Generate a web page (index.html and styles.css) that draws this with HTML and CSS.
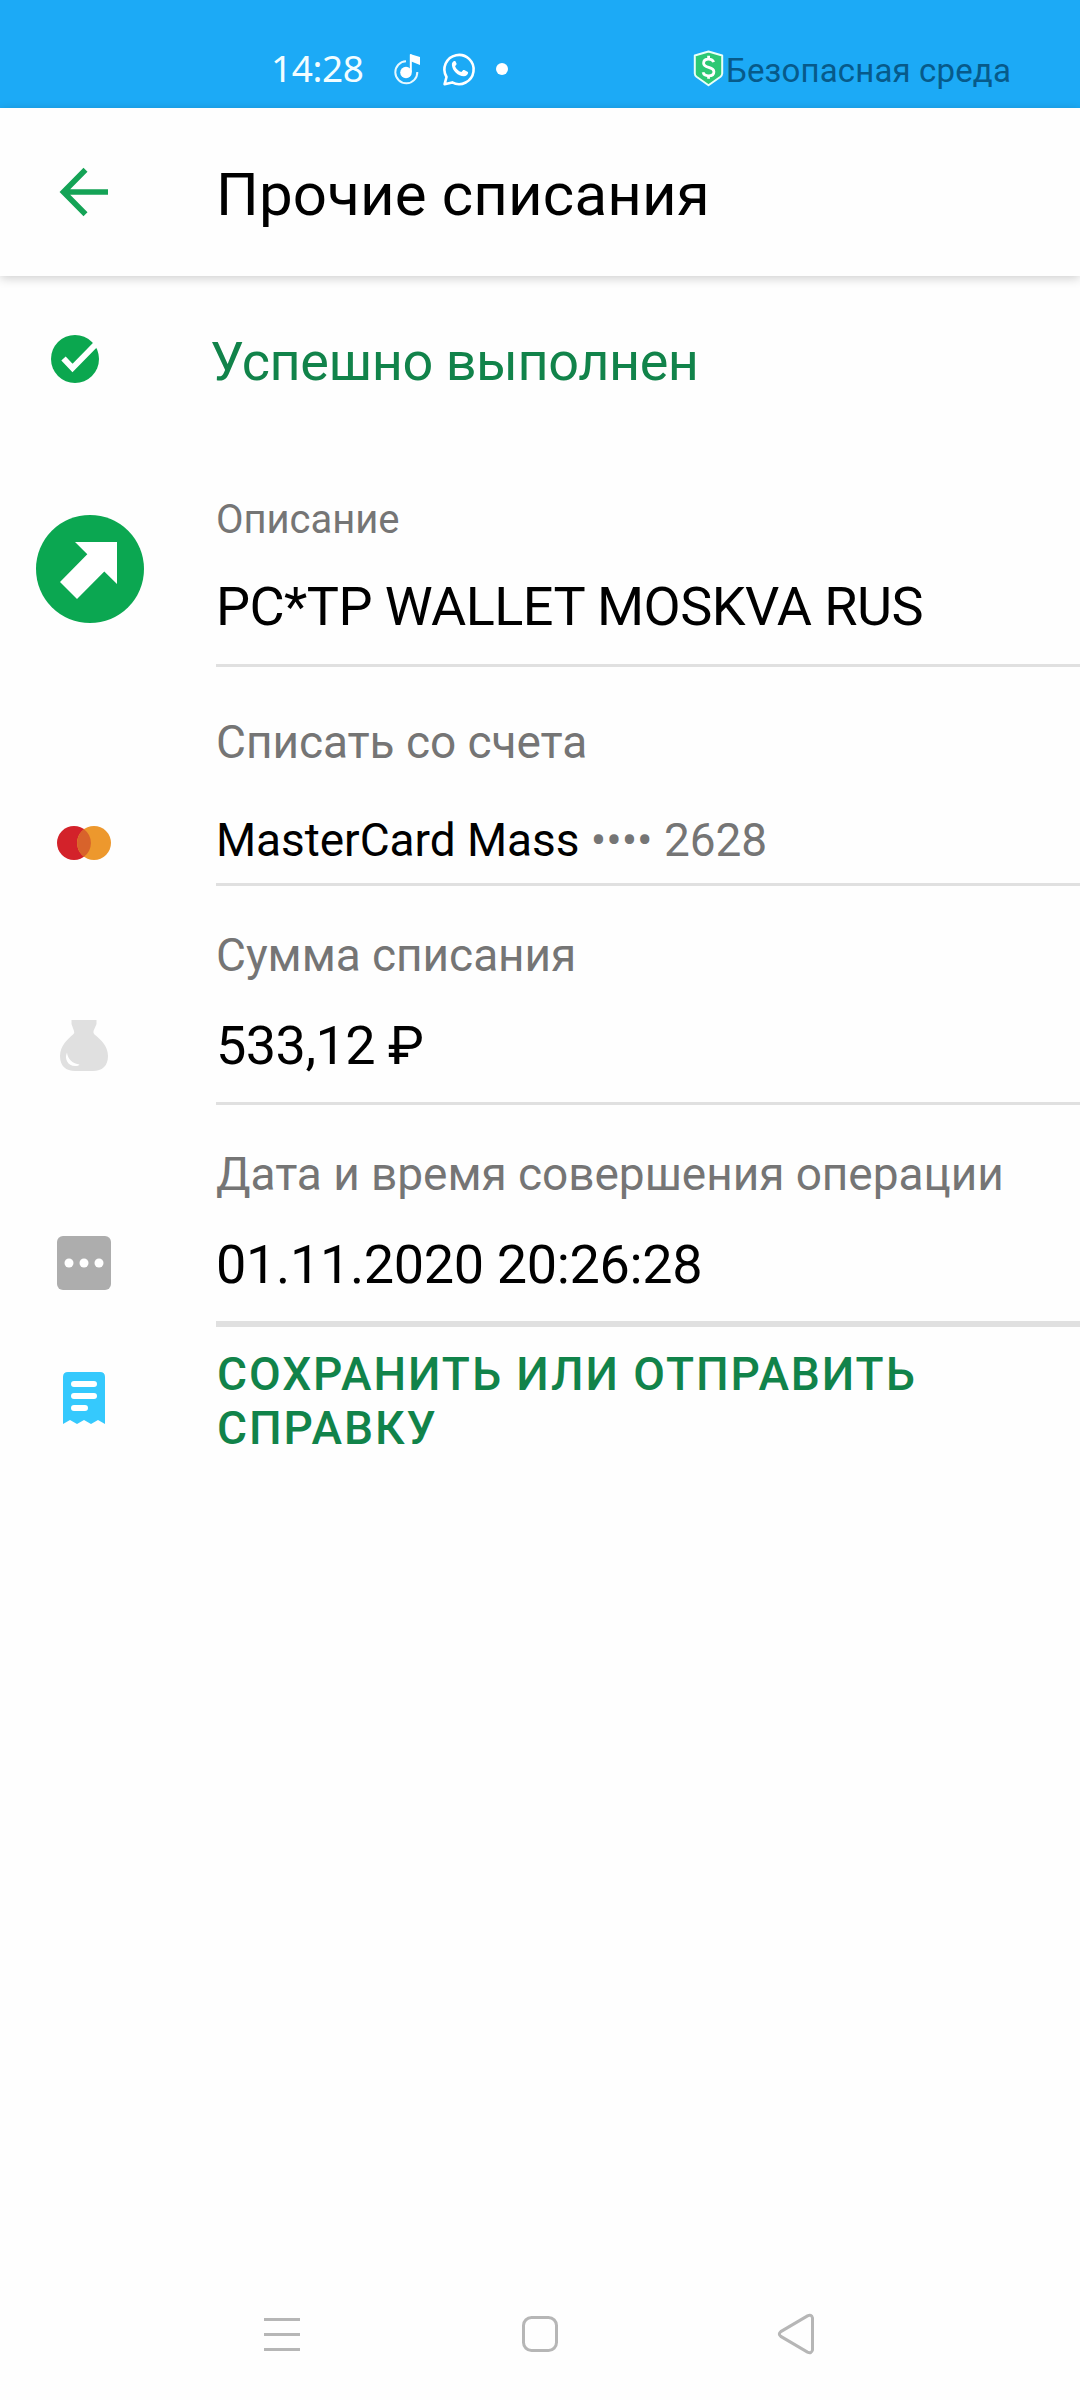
FILE: index.html
```html
<!DOCTYPE html>
<html lang="ru">
<head>
<meta charset="utf-8">
<title>Прочие списания</title>
<link rel="stylesheet" href="styles.css">
</head>
<body>
<div class="screen">
  <div class="statusbar">
    <span class="clock">14:28</span>
    <svg class="sb-music" width="28" height="32" viewBox="0 0 28 32"><circle cx="12" cy="19.500" r="5.800" fill="#fff"/><path d="M16.800 19V1.500" stroke="#fff" stroke-width="2"/><path d="M16 1l10 3v8l-10-4z" fill="#fff"/><path d="M12 8.300A11 11 0 1 0 23.300 19" fill="none" stroke="#e6f8ff" stroke-width="2"/></svg>
    <svg class="sb-whatsapp" width="34" height="34" viewBox="0 0 34 34"><path d="M3.500 25A14.600 14.600 0 1 1 9.200 30.400L1.600 32.200Z" fill="none" stroke="#fff" stroke-width="2.600" stroke-linejoin="round"/><path d="M11.300 9c-1.600.6-2.500 2-2.400 4 .3 5.700 6.200 11.200 12 11.200 2.300 0 3.800-1.200 4.200-3.200.1-.6-.1-.9-.6-1.200l-3.300-1.700c-.6-.3-1-.2-1.400.3l-1.400 1.700c-3-.9-5.300-3.200-6.300-5.800l1.300-1.700c.3-.4.3-.7.1-1.200L12.400 9.300c-.2-.4-.6-.5-1.100-.3z" fill="#fff"/></svg>
    <span class="sb-dot"></span>
    <svg class="sb-shield" width="31" height="37" viewBox="0 0 31 37"><path d="M15.500 1.500L29.200 5.500V23.500Q29 25.500 27.500 26.700L15.500 35.200 3.500 26.700Q1.900 25.500 1.800 23.500V5.500Z" fill="#2dc874" stroke="#e8fff8" stroke-width="2" stroke-linejoin="round"/><path d="M20.600 12.200C20 10.300 18.200 9.200 15.600 9.200c-3 0-5 1.500-5 4 0 5.400 10.300 3 10.300 8.500 0 2.600-2.200 4.100-5.300 4.100-3 0-5-1.300-5.500-3.500M15.600 5.800v3.400M15.600 25.800v3" fill="none" stroke="#fff" stroke-width="2.800"/></svg>
    <span class="secure">Безопасная среда</span>
  </div>

  <header class="appbar">
    <svg class="back" width="50" height="50" viewBox="0 0 50 50"><path d="M26.500 2.800L4.500 25l22 22.200M4.500 25H49" fill="none" stroke="#14a356" stroke-width="5.600"/></svg>
    <h1 class="title">Прочие списания</h1>
  </header>

  <main class="details">
    <section class="row row-status">
      <svg class="icon-status" width="48" height="48" viewBox="0 0 48 48"><circle cx="24" cy="24" r="24" fill="#0ba74f"/><path d="M12.500 23.500l9 9.500L46 8" fill="none" stroke="#fff" stroke-width="6"/></svg>
      <p class="status-text">Успешно выполнен</p>
    </section>

    <section class="row row-description">
      <svg class="icon-transfer" width="108" height="108" viewBox="0 0 108 108"><circle cx="54" cy="54" r="54" fill="#0ba751"/><path d="M39 27H81V69L68.300 56.500 41 84 24 67 51.300 39.300Z" fill="#fff"/></svg>
      <div class="field">
        <p class="label label-small">Описание</p>
        <p class="value">PC*TP WALLET MOSKVA RUS</p>
      </div>
    </section>

    <section class="row row-account">
      <svg class="icon-card" width="54" height="34" viewBox="0 0 54 34"><circle cx="17" cy="17" r="17" fill="#d3222a"/><circle cx="37" cy="17" r="17" fill="#ed982d"/><path d="M27 3.300a17 17 0 0 1 0 27.400a17 17 0 0 1 0-27.400z" fill="#d8632b"/></svg>
      <div class="field">
        <p class="label">Списать со счета</p>
        <p class="value value-card">MasterCard Mass <span class="mask">•••• 2628</span></p>
      </div>
    </section>

    <section class="row row-amount">
      <svg class="icon-bag" width="48" height="51" viewBox="0 0 48 51"><path d="M11.500 0H36.500V4L33.500 11Q33 13 34.500 14.500C41 20 48 26 48 36C48 46 42 51 33 51H15C6 51 0 46 0 36C0 26 7 20 13 14.500Q15 13 14 11L11.500 4Z" fill="#e0e0e0"/><path d="M7 32.500C4 39 8 46.500 16 46Q18.500 46 19.500 44.500C13 44 7.500 39 7 32.500Z" fill="#fff"/></svg>
      <div class="field">
        <p class="label">Сумма списания</p>
        <p class="value">533,12 ₽</p>
      </div>
    </section>

    <section class="row row-date">
      <svg class="icon-dots" width="54" height="54" viewBox="0 0 54 54"><rect width="54" height="54" rx="6" fill="#adadad"/><g fill="#fff"><circle cx="12" cy="27" r="4.500"/><circle cx="27" cy="27" r="4.500"/><circle cx="42" cy="27" r="4.500"/></g></svg>
      <div class="field">
        <p class="label">Дата и время совершения операции</p>
        <p class="value value-date">01.11.2020 20:26:28</p>
      </div>
    </section>

    <section class="row row-receipt">
      <svg class="icon-receipt" width="42" height="52" viewBox="0 0 42 52"><path d="M5 0H37Q42 0 42 5V52L35 48 28 52 21 48 14 52 7 48 0 52V5Q0 0 5 0Z" fill="#35c9fd"/><g stroke="#fff" stroke-width="6" stroke-linecap="round"><path d="M11 12H31M11 24H31M11 36H22"/></g></svg>
      <p class="action">СОХРАНИТЬ ИЛИ ОТПРАВИТЬ СПРАВКУ</p>
    </section>
  </main>

  <nav class="navbar">
    <svg width="36" height="42" viewBox="0 0 36 42"><path d="M0 6.500H36M0 21.500H36M0 36.500H36" stroke="#b6b6b6" stroke-width="3"/></svg>
    <svg width="36" height="42" viewBox="0 0 36 42"><rect x="2.500" y="4.500" width="33" height="33" rx="8" fill="none" stroke="#b6b6b6" stroke-width="3"/></svg>
    <svg width="38" height="42" viewBox="0 0 38 42"><path d="M30.500 2.900L3.800 18.600Q.8 21 3.800 23.400L30.500 39.100Q34.500 41 35.500 37V5Q34.500 1 30.500 2.900Z" fill="none" stroke="#b6b6b6" stroke-width="3"/></svg>
  </nav>
</div>
</body>
</html>
```

FILE: styles.css
```css
* { box-sizing: border-box; }
body { margin: 0; background: #fefefe; }
h1, p { margin: 0; font-weight: 400; }
svg { display: block; flex: none; overflow: visible; }

.screen {
  width: 1080px;
  height: 2400px;
  display: flex;
  flex-direction: column;
  background: #fefefe;
  color: #000;
  font-family: Roboto, "Liberation Sans", sans-serif;
}

.statusbar {
  height: 108px;
  flex: none;
  display: flex;
  align-items: flex-start;
  padding-left: 271px;
  background: #1caaf6;
  white-space: nowrap;
}
.clock {
  width: 123px;
  margin-top: 42px;
  font: 400 37px/52px "Noto Sans", sans-serif;
  letter-spacing: -0.4px;
  color: #f2fdff;
}
.sb-music { margin-top: 53px; }
.sb-whatsapp { margin: 52px 0 0 21px; }
.sb-dot { width: 12px; height: 12px; margin: 63px 0 0 19px; border-radius: 50%; background: #fff; }
.sb-shield { margin: 50px 0 0 185px; }
.secure { margin: 51px 0 0 2px; font-size: 33px; line-height: 40px; letter-spacing: 0.15px; color: #075a8a; }

.appbar {
  height: 168px;
  flex: none;
  display: grid;
  grid-template-columns: 216px 1fr;
  align-items: start;
  background: #fefefe;
  box-shadow: 0 2px 10px rgba(0, 0, 0, 0.2);
}
.back { margin: 59px 0 0 59px; }
.title { margin-top: 52px; font-size: 60px; line-height: 70px; letter-spacing: 0.15px; }

.details { flex: 1; }
.row { display: grid; grid-template-columns: 216px 1fr; align-items: start; }
.field { height: 100%; border-bottom: 3px solid #e0e0e0; }
.label { font-size: 46px; line-height: 54px; letter-spacing: -0.05px; color: #757575; }
.label-small { font-size: 40px; line-height: 48px; }
.value { margin-top: 31px; font-size: 54px; line-height: 64px; letter-spacing: -0.55px; }
.value-date { letter-spacing: -0.35px; }

.row-status { height: 156px; }
.icon-status { margin: 59px 0 0 51px; }
.status-text { margin: 54px 0 0 -6px; font-size: 54px; line-height: 64px; letter-spacing: -0.45px; color: #11834a; }

.row-description { height: 235px; }
.row-description .field { padding-top: 64px; }
.icon-transfer { margin: 83px 0 0 36px; }

.row-account { height: 219px; }
.row-account .field { padding-top: 48px; }
.icon-card { margin: 159px 0 0 57px; }
.value-card { margin-top: 44px; font-size: 46px; line-height: 54px; letter-spacing: -0.05px; }
.mask { color: #757575; }

.row-amount { height: 219px; }
.row-amount .field,
.row-date .field { padding-top: 42px; }
.row-amount .value,
.row-date .value { margin-top: 32px; }
.icon-bag { margin: 134px 0 0 60px; }

.row-date { height: 222px; }
.row-date .field { border-bottom-width: 6px; }
.icon-dots { margin: 131px 0 0 57px; }

.icon-receipt { margin: 45px 0 0 63px; }
.action {
  width: 760px;
  margin: 20px 0 0 1px;
  font-size: 46px;
  font-weight: 500;
  line-height: 54px;
  letter-spacing: 1.95px;
  color: #11834a;
}

.navbar {
  height: 87px;
  flex: none;
  display: flex;
  justify-content: space-between;
  padding: 0 265px 0 264px;
}
```
